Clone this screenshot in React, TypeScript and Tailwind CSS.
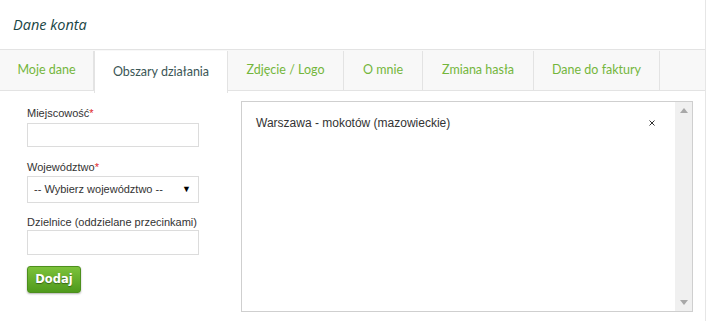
import React from "react";

const tabs = ["Moje dane", "Obszary działania", "Zdjęcie / Logo", "O mnie", "Zmiana hasła", "Dane do faktury"];
const widths = ["w-[94px]", "w-[134px]", "w-[116px]", "w-[79px]", "w-[111px]", "w-[126px]"];

export default function App() {
  return (
    <div className="w-[707px] h-[321px] bg-white overflow-hidden" style={{ fontFamily: '"Liberation Sans", Arial, sans-serif' }}>
      <div className="w-[706px] h-full border-r border-[#e6e6e6] flex flex-col">
        <div className="h-[49px] flex items-center pl-[13px]">
          <span className="italic font-medium text-[14.5px] text-[#1a4645]" style={{ fontFamily: '"Open Sans", sans-serif' }}>Dane konta</span>
        </div>
        <div className="h-[42px] border-y border-[#e3e3e3] bg-[#f8f8f8] flex items-stretch pt-[1px]">
          {tabs.map((t, i) => (
            <div
              key={t}
              className={`${widths[i]} shrink-0 flex items-center justify-center text-[12.5px] border-r border-[#e3e3e3] ${
                i === 1 ? "bg-white text-[#3b5656] border-l -mb-[2px] h-[42px]" : "text-[#74b63c]"
              }`}
              style={{ fontFamily: 'Lato, sans-serif' }}
            >
              {t}
            </div>
          ))}
        </div>
        <div className="flex pt-[10px]">
          <div className="w-[241px] pl-[27px] pt-[5px] text-[11px] text-[#333]">
            <label className="block leading-[14px] mb-[3px]">
              Miejscowość<span className="text-[#e0262b]">*</span>
            </label>
            <div className="w-[172px] h-[24px] border border-[#dcdcdc]" />
            <label className="block leading-[14px] mt-[13px] mb-[2px]">
              Województwo<span className="text-[#e0262b]">*</span>
            </label>
            <div className="w-[172px] h-[27px] border border-[#dcdcdc] flex items-center justify-between pl-[6px] pr-[7px]">
              <span>-- Wybierz województwo --</span>
              <span className="text-[9px] text-black">▼</span>
            </div>
            <label className="block leading-[14px] mt-[12px] mb-[1px]">Dzielnice (oddzielane przecinkami)</label>
            <div className="w-[172px] h-[25px] border border-[#dcdcdc]" />
            <button
              className="mt-[11px] w-[54px] h-[27px] rounded-[3px] border border-[#4d8f1d] bg-gradient-to-b from-[#7cc23a] to-[#4f9a1c] text-white font-bold text-[11.5px] shadow-[0_1px_2px_rgba(0,0,0,0.3)]"
              style={{ fontFamily: "Verdana, 'DejaVu Sans', sans-serif", textShadow: "0 1px 1px rgba(0,0,0,0.4)" }}
            >
              Dodaj
            </button>
          </div>
          <div className="w-[452px] h-[211px] border border-[#cfcfcf] flex">
            <div className="flex-1 flex justify-between pl-[14px] pr-[20px] pt-[13px] text-[12px] text-[#333]">
              <span className="leading-[16px]">Warszawa - mokotów (mazowieckie)</span>
              <svg width="6" height="6" viewBox="0 0 6 6" className="mt-[5px]">
                <path d="M0.5 0.5 L5.5 5.5 M5.5 0.5 L0.5 5.5" stroke="#333" strokeWidth="1" />
              </svg>
            </div>
            <div className="w-[17px] bg-[#f0f0f0] flex flex-col justify-between items-center py-[6px]">
              <svg width="8" height="5" viewBox="0 0 8 5"><path d="M0 5 L4 0 L8 5 Z" fill="#a8a8a8" /></svg>
              <svg width="8" height="5" viewBox="0 0 8 5"><path d="M0 0 L4 5 L8 0 Z" fill="#a8a8a8" /></svg>
            </div>
          </div>
        </div>
      </div>
    </div>
  );
}
